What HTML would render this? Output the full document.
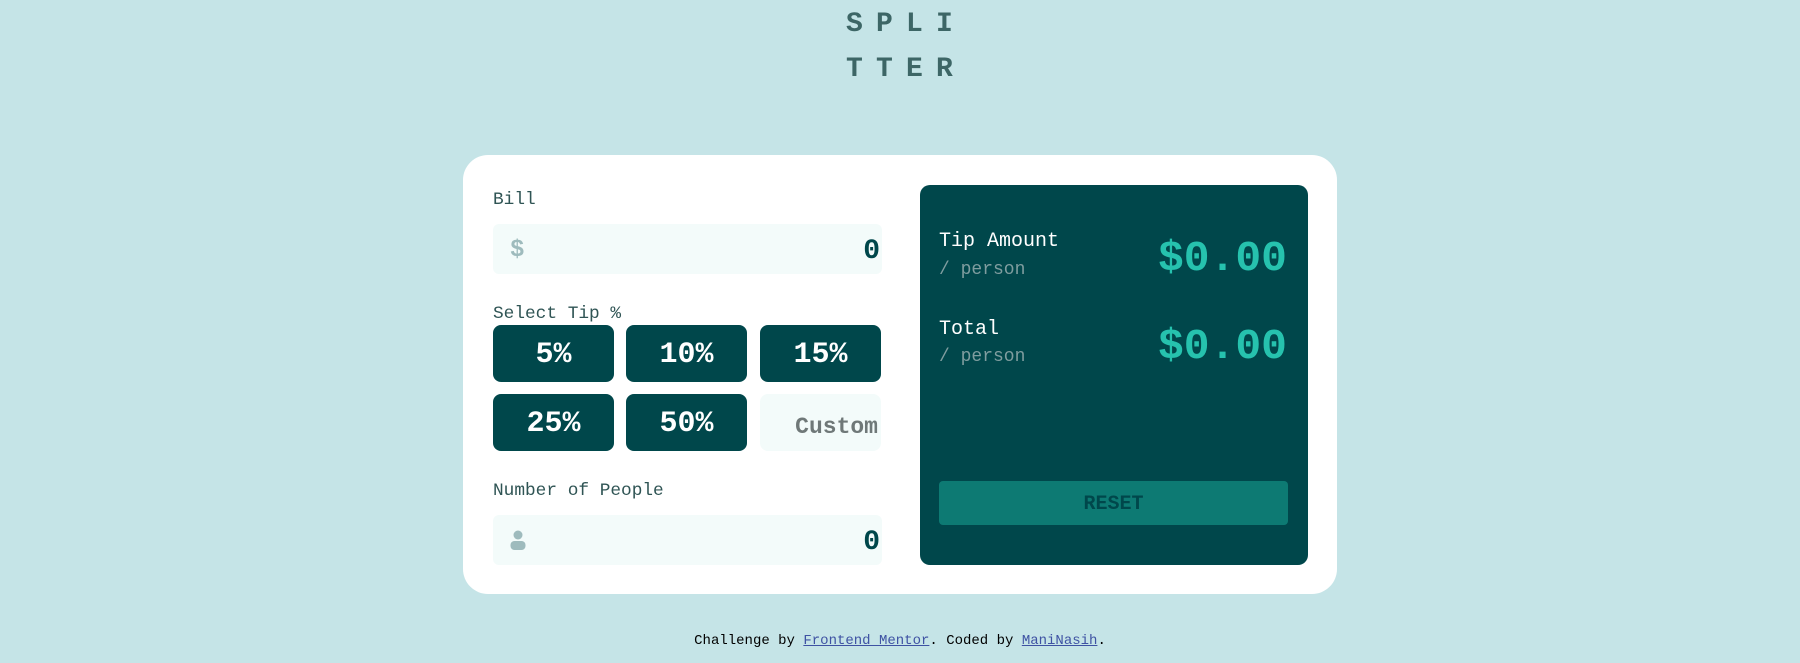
<!DOCTYPE html>
<html><head><style>
*{margin:0;padding:0;box-sizing:border-box}
body{width:1800px;height:663px;background:#c5e4e7;font-family:"Liberation Mono",monospace;position:relative;overflow:hidden}
.a{position:absolute;white-space:nowrap}
.title{color:#3d6666;font-weight:bold;font-size:28px;letter-spacing:13.2px;left:846px}
.card{left:463px;top:155px;width:874px;height:439px;background:#fff;border-radius:25px}
.lbl{color:#2f5454;font-size:17.8px;left:493px}
.inp{left:493px;width:389px;height:50px;background:#f3fbfa;border-radius:6px}
.btn{width:121px;height:57px;background:#00474b;border-radius:8px;color:#fff;font-weight:bold;font-size:30px;display:flex;align-items:center;justify-content:center;padding-top:3px}
.panel{left:920px;top:185px;width:388px;height:380px;background:#00474b;border-radius:10px}
.w{color:#fff;font-size:20px;left:939px}
.g{color:#7f9d9f;font-size:18px;left:939px}
.big{color:#26c2ae;font-weight:bold;font-size:43px;right:513px}
.zero{color:#00474b;font-weight:bold;font-size:28px;right:920px}
</style></head><body>
<div class="a title" style="top:9px">SPLI</div>
<div class="a title" style="top:54px">TTER</div>
<div class="a card"></div>
<div class="a lbl" style="top:190px">Bill</div>
<div class="a inp" style="top:224px"></div>
<div class="a" style="left:510px;top:237px;color:#9ebbbd;font-size:24px;font-weight:bold">$</div>
<div class="a zero" style="top:236px">0</div>
<div class="a lbl" style="top:304px">Select Tip %</div>
<div class="a btn" style="left:493px;top:325px">5%</div>
<div class="a btn" style="left:626px;top:325px">10%</div>
<div class="a btn" style="left:760px;top:325px">15%</div>
<div class="a btn" style="left:493px;top:394px">25%</div>
<div class="a btn" style="left:626px;top:394px">50%</div>
<div class="a btn" style="left:760px;top:394px;background:#f3fbfa;color:#6f7878;font-size:23px;justify-content:flex-end;padding-right:3px;padding-top:8px">Custom</div>
<div class="a lbl" style="top:481px">Number of People</div>
<div class="a inp" style="top:515px"></div>
<svg class="a" style="left:510px;top:530px" width="16" height="20" viewBox="0 0 16 20"><circle cx="8" cy="5" r="4.5" fill="#9ebbbd"/><rect x="0.5" y="11" width="15" height="9" rx="4" fill="#9ebbbd"/></svg>
<div class="a zero" style="top:527px">0</div>
<div class="a panel"></div>
<div class="a w" style="top:230px">Tip Amount</div>
<div class="a g" style="top:260px">/ person</div>
<div class="a big" style="top:234px">$0.00</div>
<div class="a w" style="top:318px">Total</div>
<div class="a g" style="top:347px">/ person</div>
<div class="a big" style="top:322px">$0.00</div>
<div class="a" style="left:939px;top:481px;width:349px;height:44px;background:#0d7a73;border-radius:4px;color:#00474b;font-weight:bold;font-size:20px;display:flex;align-items:center;justify-content:center;padding-top:2px">RESET</div>
<div class="a" style="left:0;width:1800px;text-align:center;top:633px;font-size:14px;color:#000">Challenge by <span style="color:#3e52a3;text-decoration:underline">Frontend Mentor</span>. Coded by <span style="color:#3e52a3;text-decoration:underline">ManiNasih</span>.</div>
</body></html>
